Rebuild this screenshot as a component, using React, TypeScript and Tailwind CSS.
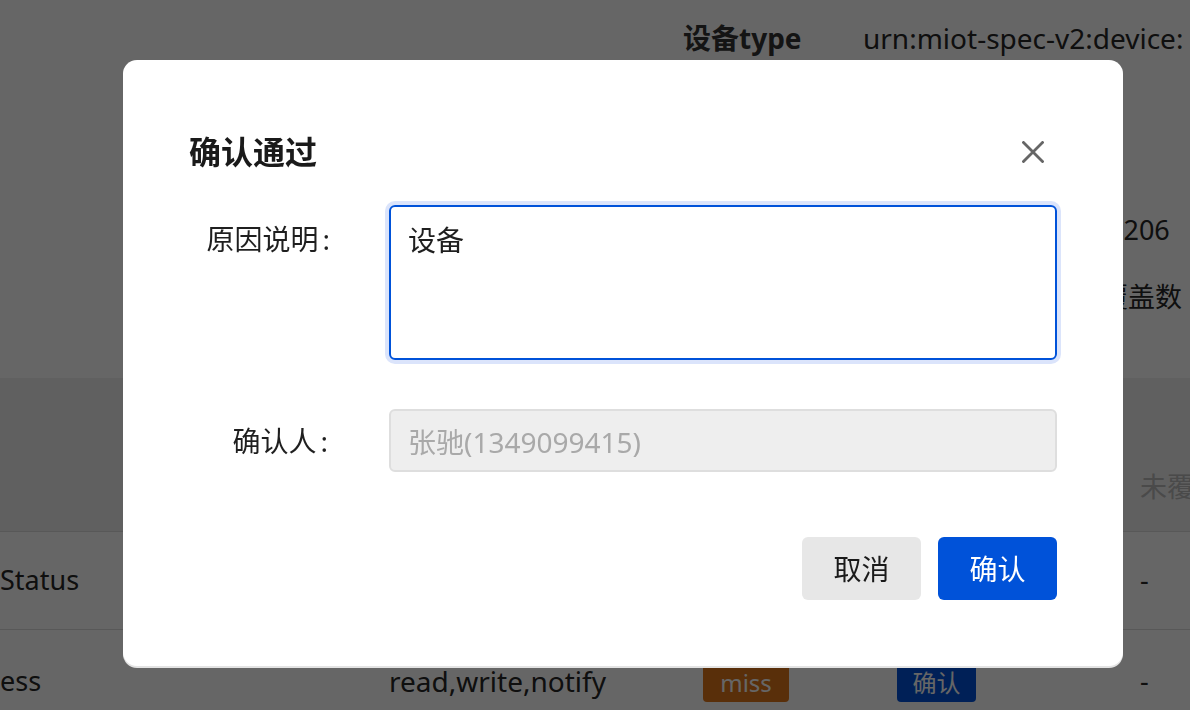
import React from "react";

const font = { fontFamily: '"Noto Sans", "Noto Sans CJK SC", sans-serif' };

function CloseIcon() {
  return (
    <svg width="22" height="22" viewBox="0 0 22 22" fill="none">
      <path d="M1.5 1.5 L20.5 20.5 M20.5 1.5 L1.5 20.5" stroke="#666666" strokeWidth="2.8" strokeLinecap="square" />
    </svg>
  );
}

function Page() {
  // 背后被遮罩的详情页
  return (
    <div className="w-[1190px] h-[710px] overflow-hidden bg-white text-[27px] text-[#262626]">
      <div className="h-[378px] pt-[18px]">
        <div className="flex ml-[683px] whitespace-nowrap leading-[40px]">
          <div className="w-[180px] shrink-0 text-[28px] font-bold text-[#333]">设备type</div>
          <div className="text-[28px]">urn:miot-spec-v2:device:</div>
        </div>
        <div className="ml-[1101px] mt-[152px] leading-[40px] whitespace-nowrap">
          <div className="pl-[7px]">1206</div>
          <div className="mt-[27px]">覆盖数</div>
        </div>
      </div>

      <div className="h-[154px] bg-[#f0f0f0] border-b border-[#dcdcdc] grid grid-cols-[389px_314px_194px_243px_1fr] items-end pb-[24px] text-[#b8b8b8] leading-[40px]">
        <div />
        <div />
        <div />
        <div />
        <div className="whitespace-nowrap">未覆</div>
      </div>

      <div className="h-[98px] border-b border-[#dcdcdc] grid grid-cols-[389px_314px_194px_243px_1fr] items-center">
        <div>Status</div>
        <div>read,notify</div>
        <div />
        <div />
        <div>-</div>
      </div>

      <div className="h-[98px] grid grid-cols-[389px_314px_194px_243px_1fr] items-center">
        <div className="pt-[4px]">ess</div>
        <div className="pt-[4px] text-[28px]">read,write,notify</div>
        <div className="pt-[6px]">
          <span className="inline-flex items-center justify-center w-[86px] h-[38px] rounded-[4px] bg-[#de7519] text-white text-[24px]">miss</span>
        </div>
        <div className="pt-[6px]">
          <span className="inline-flex items-center justify-center w-[79px] h-[38px] rounded-[4px] bg-[#0052d9] text-white text-[24px]">确认</span>
        </div>
        <div className="pt-[4px]">-</div>
      </div>
    </div>
  );
}

export default function App() {
  return (
    <div style={font} className="relative w-[1190px] h-[710px] overflow-hidden">
      <Page />
      <div className="fixed inset-0 bg-black/60" />

      <div className="fixed left-[123px] top-[60px] w-[1000px] h-[606px] rounded-[14px] bg-white shadow-[0_2px_0_0_#e3e3e3] text-[#1f1f1f]">
        <div className="flex items-center justify-between pl-[66px] pr-[72px] pt-[68px] leading-[48px]">
          <h2 className="text-[32px] font-bold text-[#1a1a1a]">确认通过</h2>
          <button type="button" className="w-9 h-9 flex items-center justify-center" aria-label="关闭">
            <CloseIcon />
          </button>
        </div>

        <div className="px-[66px] mt-[29px]">
          <div className="flex">
            <label className="w-[200px] pr-[59px] pt-[14px] text-right text-[28px] leading-[40px] whitespace-nowrap">
              原因说明<span className="ml-[4px]">:</span>
            </label>
            <textarea
              defaultValue="设备"
              className="flex-1 h-[155px] resize-none rounded-[6px] border-2 border-[#0052d9] px-[17px] pt-[12px] text-[28px] leading-[42px] text-[#1f1f1f] outline-none shadow-[0_0_0_4px_#dbe4fb]"
            />
          </div>

          <div className="flex items-center mt-[49px]">
            <label className="w-[200px] pr-[61px] text-right text-[28px] leading-[40px] whitespace-nowrap">
              确认人<span className="ml-[4px]">:</span>
            </label>
            <input
              disabled
              value="张驰(1349099415)"
              className="flex-1 h-[63px] rounded-[6px] border-2 border-[#dedede] bg-[#eeeeee] px-[17px] text-[28px] text-[#a9a9a9]"
            />
          </div>

          <div className="flex justify-end gap-[17px] mt-[65px]">
            <button type="button" className="w-[119px] h-[63px] rounded-[6px] bg-[#e7e7e7] text-[28px] text-[#1a1a1a]">
              取消
            </button>
            <button type="button" className="w-[119px] h-[63px] rounded-[6px] bg-[#0052d9] text-[28px] text-white">
              确认
            </button>
          </div>
        </div>
      </div>
    </div>
  );
}
